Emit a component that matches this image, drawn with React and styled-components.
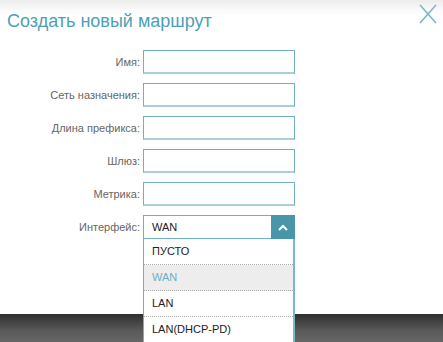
import React from "react";
import styled, { createGlobalStyle } from "styled-components";

const Global = createGlobalStyle`
  html, body { margin: 0; padding: 0; background: #fff; }
  body { font-family: "Liberation Sans", Arial, sans-serif; }
`;

const Page = styled.div`
  width: 443px;
  height: 342px;
  display: flex;
  flex-direction: column;
  overflow: hidden;
  position: relative;
`;

const Dialog = styled.div`
  height: 314px;
  background: linear-gradient(to bottom, #ececec 0px, #fafafa 10px, #fff 18px);
  position: relative;
`;

const Footer = styled.div`
  flex: 1;
  background: linear-gradient(to bottom, #2f2f2f 0%, #5a5a5a 60%, #666 100%);
`;

const Header = styled.div`
  display: flex;
  justify-content: space-between;
  align-items: flex-start;
  padding: 10px 6px 0 7px;
  height: 40px;
  box-sizing: border-box;
`;

const Title = styled.h1`
  margin: 0;
  font-weight: normal;
  font-size: 18px;
  line-height: 22px;
  color: #4e9fb6;
`;

const Close = styled.button`
  border: none;
  background: none;
  padding: 0;
  margin-top: -6px;
  width: 18px;
  height: 20px;
  cursor: pointer;
`;

const Form = styled.div`
  display: grid;
  grid-template-columns: 140px 152px;
  column-gap: 3px;
  row-gap: 9px;
  margin-top: 10px;
  align-items: center;
`;

const Label = styled.label`
  text-align: right;
  font-size: 11px;
  color: #666;
`;

const Input = styled.input`
  box-sizing: border-box;
  width: 152px;
  height: 24px;
  border: 1px solid #6fb1c2;
  border-bottom: 2px solid #a7d0da;
  outline: none;
  margin: 0;
  padding: 0 6px;
  font: inherit;
  font-size: 11px;
  background: #fff;
`;

const SelectWrap = styled.div`
  position: relative;
  width: 152px;
  height: 24px;
`;

const SelectBox = styled.div`
  box-sizing: border-box;
  display: flex;
  height: 24px;
  border: 1px solid #6fb1c2;
  border-right: none;
  background: #fff;
`;

const SelectValue = styled.div`
  flex: 1;
  font-size: 11px;
  color: #222;
  padding-left: 8px;
  line-height: 22px;
`;

const Arrow = styled.div`
  width: 24px;
  height: 24px;
  margin-top: -1px;
  background: #4896a8;
  display: flex;
  align-items: center;
  justify-content: center;
`;

const Menu = styled.ul`
  position: absolute;
  top: 24px;
  left: 0;
  width: 152px;
  box-sizing: border-box;
  margin: 0;
  padding: 0;
  list-style: none;
  background: #fff;
  border-left: 1px solid #6fb1c2;
  border-right: 2px solid #7ab8c7;
  z-index: 2;
`;

const Option = styled.li`
  height: 26px;
  line-height: 25px;
  padding-left: 8px;
  font-size: 11px;
  color: ${(p) => (p.$active ? "#6bb0c2" : "#222")};
  background: ${(p) => (p.$active ? "#ededed" : "#fff")};
  border-bottom: ${(p) => (p.$last ? "none" : "1px dotted #aaa")};
  box-sizing: border-box;
`;

const fields = ["Имя:", "Сеть назначения:", "Длина префикса:", "Шлюз:", "Метрика:"];
const options = ["ПУСТО", "WAN", "LAN", "LAN(DHCP-PD)"];

export default function App() {
  return (
    <Page>
      <Global />
      <Dialog>
        <Header>
          <Title>Создать новый маршрут</Title>
          <Close aria-label="close">
            <svg width="18" height="20" viewBox="0 0 18 20">
              <path d="M1 1 L17 19 M17 1 L1 19" stroke="#7ab8c7" strokeWidth="1.6" fill="none" />
            </svg>
          </Close>
        </Header>
        <Form>
          {fields.map((f) => (
            <React.Fragment key={f}>
              <Label>{f}</Label>
              <Input />
            </React.Fragment>
          ))}
          <Label>Интерфейс:</Label>
          <SelectWrap>
            <SelectBox>
              <SelectValue>WAN</SelectValue>
              <Arrow>
                <svg width="10" height="7" viewBox="0 0 10 7">
                  <path d="M1 6 L5 2 L9 6" stroke="#fff" strokeWidth="2" fill="none" />
                </svg>
              </Arrow>
            </SelectBox>
            <Menu>
              {options.map((o, i) => (
                <Option key={o} $active={o === "WAN"} $last={i === options.length - 1}>
                  {o}
                </Option>
              ))}
            </Menu>
          </SelectWrap>
        </Form>
      </Dialog>
      <Footer />
    </Page>
  );
}
